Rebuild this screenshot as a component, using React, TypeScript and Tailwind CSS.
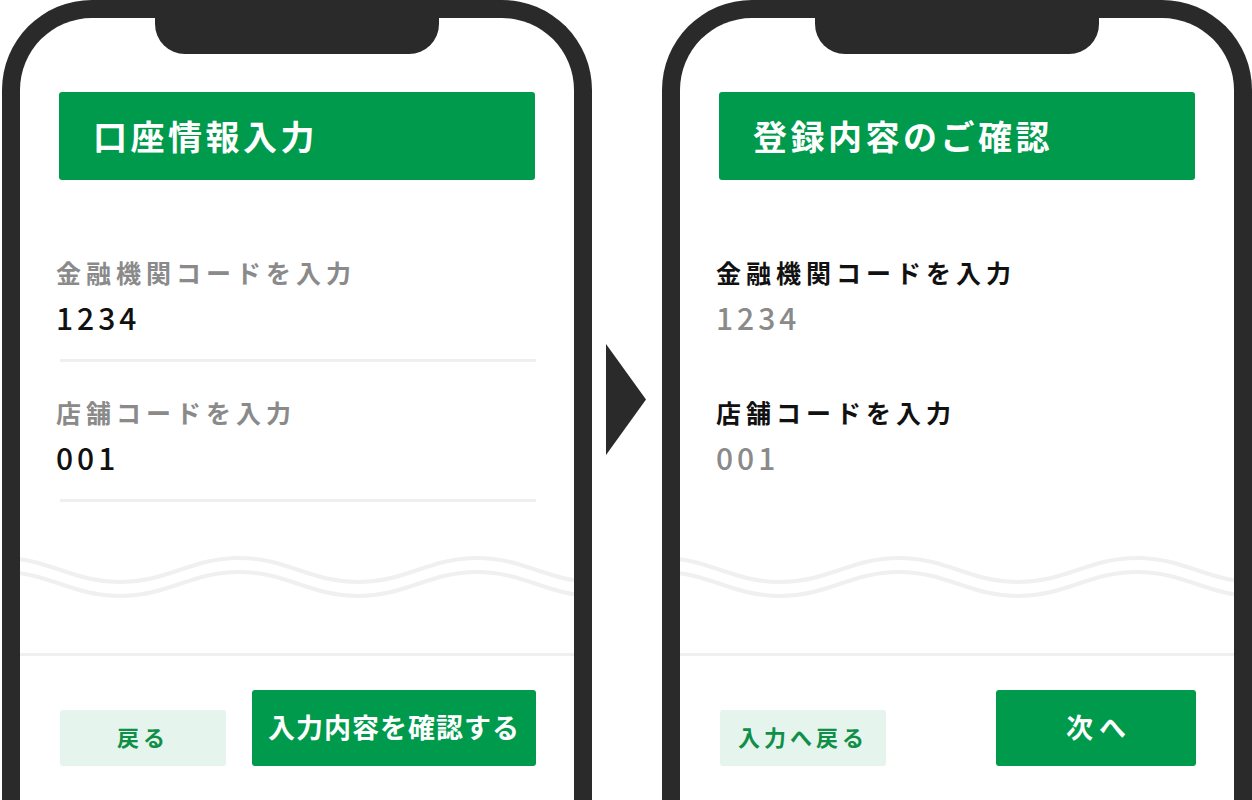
import React from 'react';

interface Field {
  label: string;
  value: string;
}

interface PhoneProps {
  title: string;
  fields: Field[];
  confirm?: boolean;
  backLabel: string;
  nextLabel: string;
  nextClass: string;
}

const fields: Field[] = [
  { label: '金融機関コードを入力', value: '1234' },
  { label: '店舗コードを入力', value: '001' },
];

// two parallel waves across the inner width of the phone
const Wave: React.FC = () => (
  <svg width="554" height="60" viewBox="0 0 554 60" className="block mt-[43px]" fill="none">
    <path
      d="M-19 13 C29 13 52 37 100 37 S171 13 219 13 S290 37 338 37 S409 13 457 13 S528 37 576 37"
      stroke="#f0f0f0"
      strokeWidth="4"
    />
    <path
      d="M-19 27 C29 27 52 51 100 51 S171 27 219 27 S290 51 338 51 S409 27 457 27 S528 51 576 51"
      stroke="#f0f0f0"
      strokeWidth="4"
    />
  </svg>
);

const Phone: React.FC<PhoneProps> = ({ title, fields, confirm, backLabel, nextLabel, nextClass }) => {
  return (
    <div className="relative w-[590px] h-[860px] shrink-0 border-[18px] border-b-0 border-[#2a2a2a] rounded-t-[90px] bg-white">
      <div className="absolute left-[135px] top-0 w-[284px] h-[36px] bg-[#2a2a2a] rounded-b-[30px]" />

      <div className="flex flex-col pt-[74px]">
        <div className="ml-[39px] mr-[39px] h-[88px] rounded-[3px] bg-[#009a4c] flex items-center pl-[34px]">
          <h1 className="text-white text-[34px] leading-none font-bold tracking-[3.5px]">{title}</h1>
        </div>

        <div className="mt-[74px] flex flex-col">
          {fields.map((f, i) => (
            <div key={f.label} className={i === 0 ? '' : 'mt-[32px]'}>
              <div
                className={`pl-[36px] text-[25px] leading-[36px] font-bold tracking-[5px] ${
                  confirm ? 'text-[#111111]' : 'text-[#8a8a8a]'
                }`}
              >
                {f.label}
              </div>
              <div
                className={`pl-[36px] mt-[9px] text-[30px] leading-[36px] font-medium tracking-[4px] ${
                  confirm ? 'text-[#8a8a8a]' : 'text-[#111111]'
                }`}
              >
                {f.value}
              </div>
              <div
                className={`ml-[40px] mr-[38px] mt-[24px] h-[3px] ${confirm ? 'bg-transparent' : 'bg-[#efefef]'}`}
              />
            </div>
          ))}
        </div>

        <Wave />

        <div className="mt-[48px] h-[3px] bg-[#efefef]" />

        <div className="mt-[34px] pl-[40px] pr-[38px] flex items-end justify-between">
          <button className="w-[166px] h-[56px] pb-[3px] rounded-[3px] bg-[#e5f4ec] text-[#0f8f47] text-[22px] font-bold tracking-[4px] flex items-center justify-center">
            {backLabel}
          </button>
          <button
            className={`${nextClass} h-[76px] pb-[2px] rounded-[3px] bg-[#009a4c] text-white text-[27px] font-bold flex items-center justify-center`}
          >
            {nextLabel}
          </button>
        </div>
      </div>
    </div>
  );
};

const App: React.FC = () => {
  return (
    <div className="w-[1252px] h-[800px] overflow-hidden bg-white flex items-start font-['Noto_Sans_CJK_JP','Noto_Sans',sans-serif]">
      <div className="ml-[2px]">
        <Phone
          title="口座情報入力"
          fields={fields}
          backLabel="戻る"
          nextLabel="入力内容を確認する"
          nextClass="w-[284px] tracking-[1px]"
        />
      </div>

      <div className="w-[70px] shrink-0 pt-[344px] pl-[14px]">
        <svg width="40" height="111" viewBox="0 0 40 111">
          <polygon points="0,0 40,55.5 0,111" fill="#2a2a2a" />
        </svg>
      </div>

      <Phone
        title="登録内容のご確認"
        fields={fields}
        confirm
        backLabel="入力へ戻る"
        nextLabel="次へ"
        nextClass="w-[200px] tracking-[6px] pl-[6px]"
      />
    </div>
  );
};

export default App;
